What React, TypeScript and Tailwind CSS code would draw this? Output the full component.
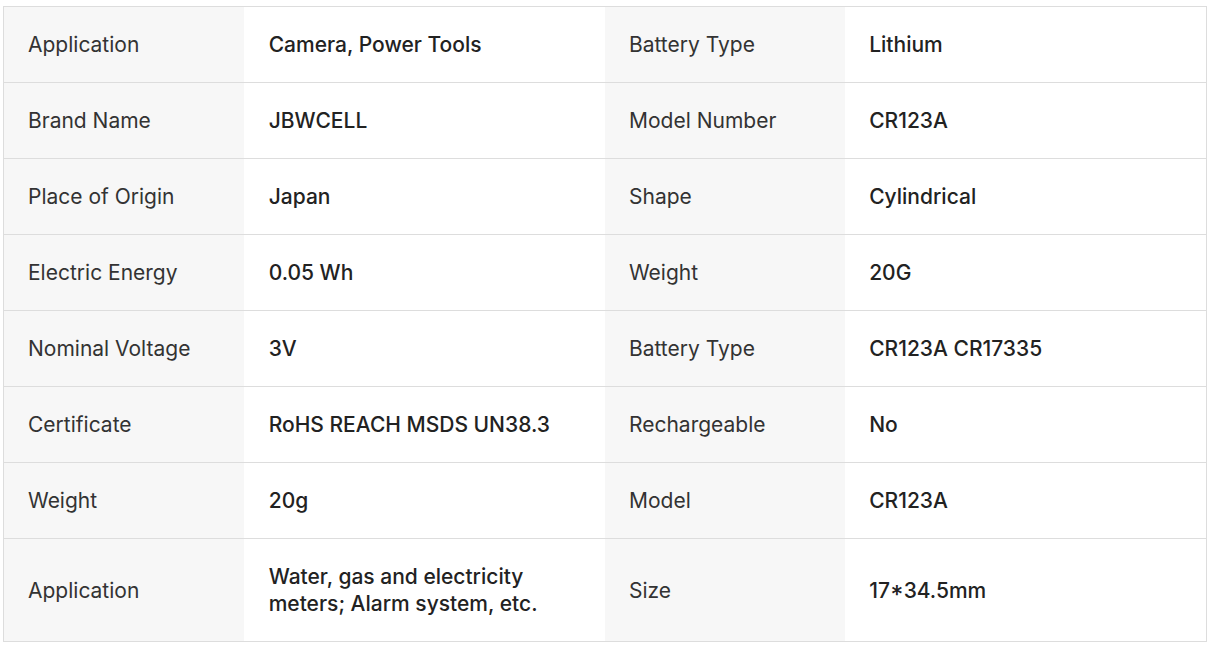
const rows: [string, string, string, string][] = [
  ["Application", "Camera, Power Tools", "Battery Type", "Lithium"],
  ["Brand Name", "JBWCELL", "Model Number", "CR123A"],
  ["Place of Origin", "Japan", "Shape", "Cylindrical"],
  ["Electric Energy", "0.05 Wh", "Weight", "20G"],
  ["Nominal Voltage", "3V", "Battery Type", "CR123A CR17335"],
  ["Certificate", "RoHS REACH MSDS UN38.3", "Rechargeable", "No"],
  ["Weight", "20g", "Model", "CR123A"],
  ["Application", "Water, gas and electricity meters; Alarm system, etc.", "Size", "17*34.5mm"],
];

const App = () => {
  return (
    <div className="bg-white pl-[3px] pt-[6px] font-['Inter',sans-serif]">
      <table className="w-[1204px] table-fixed border-collapse border border-[#dddddd] text-[21px] leading-[27px]">
        <colgroup>
          <col className="w-[240px]" />
          <col className="w-[361px]" />
          <col className="w-[240px]" />
          <col className="w-[361px]" />
        </colgroup>
        <tbody>
          {rows.map((r, i) => (
            <tr key={i} className="border-b border-[#dddddd]">
              <td className="bg-[#f7f7f7] py-6 pl-[24px] pr-4 align-middle text-[#333333]">
                {r[0]}
              </td>
              <td className="py-6 pl-[25px] pr-[40px] align-middle font-medium text-[#222222]">
                {r[1]}
              </td>
              <td className="bg-[#f7f7f7] py-6 pl-[24px] pr-4 align-middle text-[#333333]">
                {r[2]}
              </td>
              <td className="py-6 pl-[24px] pr-4 align-middle font-medium text-[#222222]">
                {r[3]}
              </td>
            </tr>
          ))}
        </tbody>
      </table>
    </div>
  );
};

export default App;
